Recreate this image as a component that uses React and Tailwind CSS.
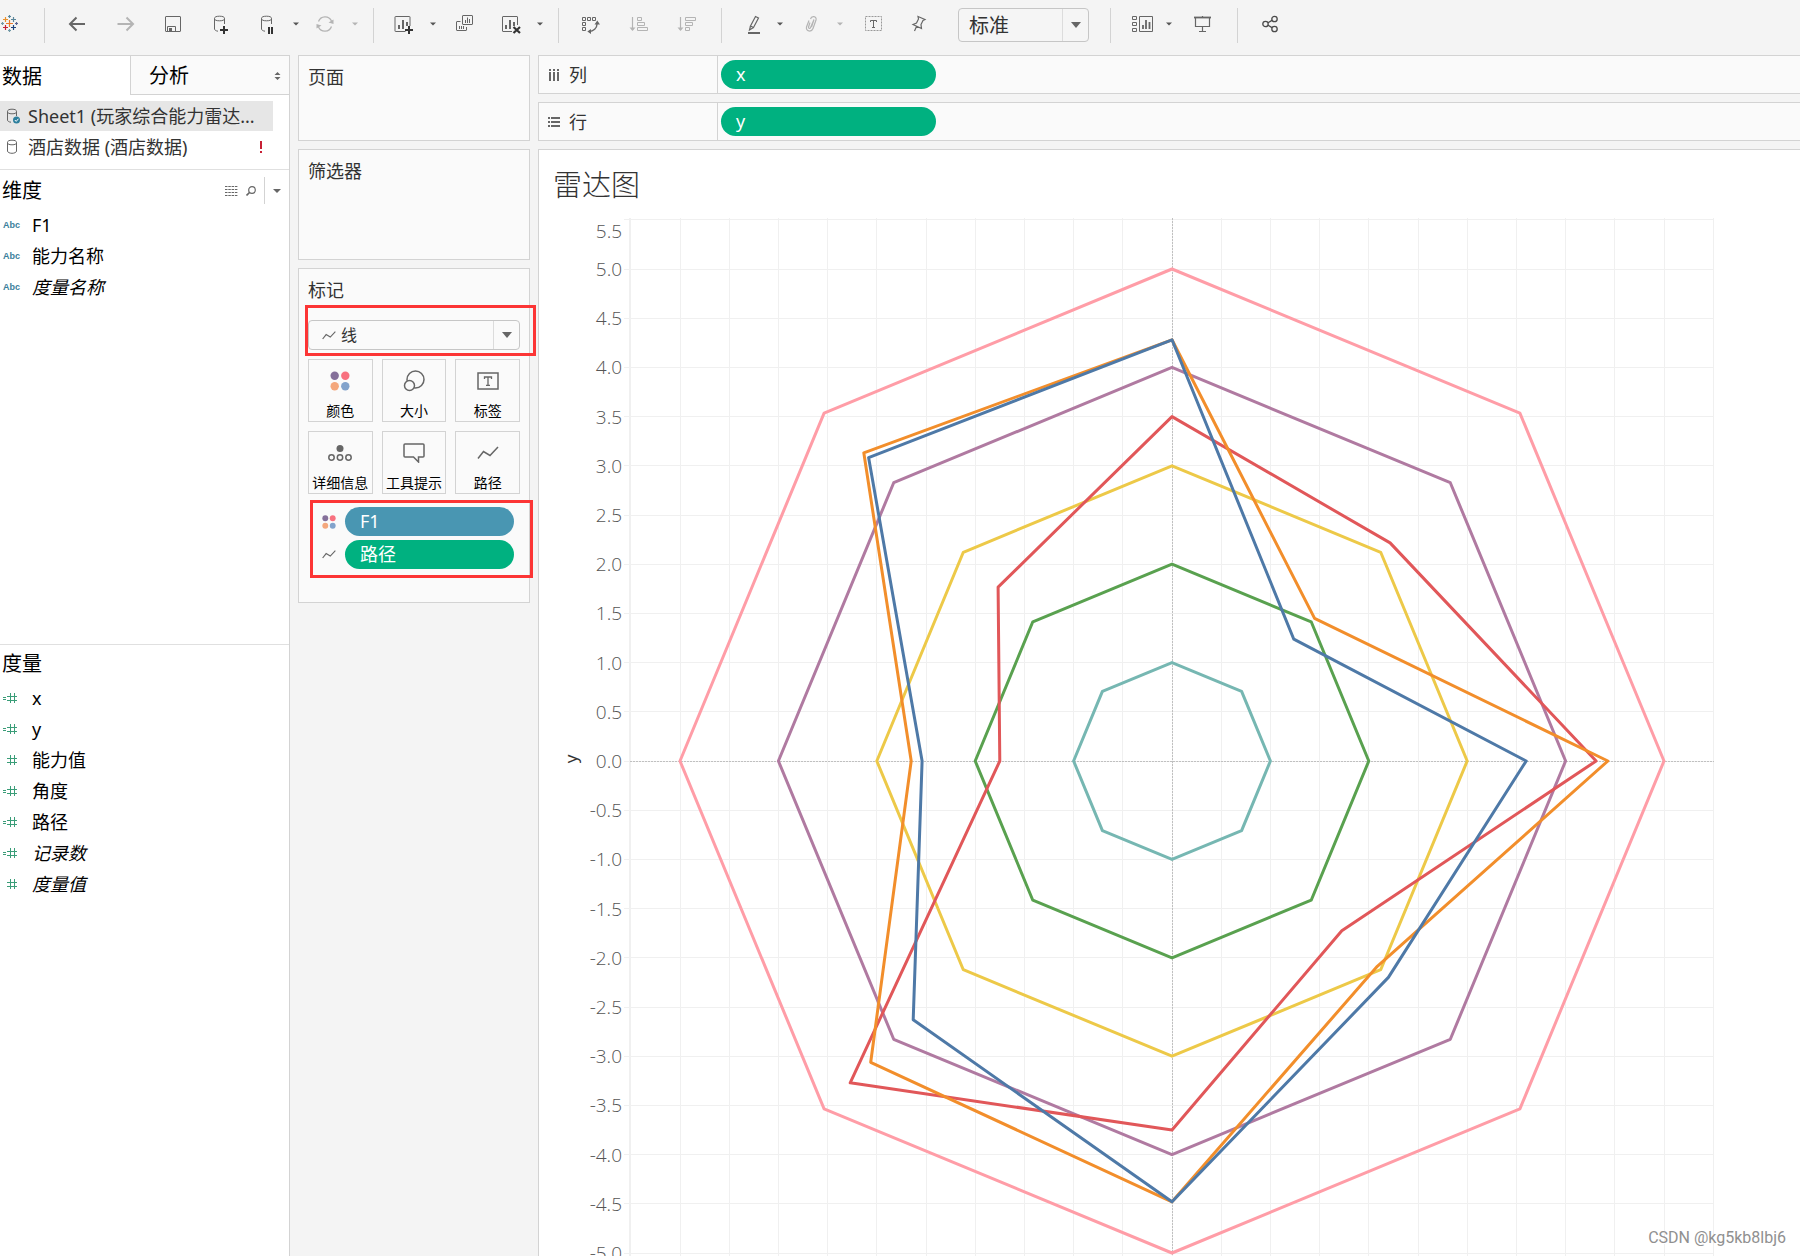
import React from "react";

const SANS = "font-['Noto_Sans','Noto_Sans_CJK_SC',sans-serif]";

/* ---------- icons ---------- */

function Svg({ w = 24, h = 24, children, className = "", stroke = "#666666", sw = 1 }) {
  return (
    <svg
      width={w}
      height={h}
      viewBox={`0 0 ${w} ${h}`}
      fill="none"
      stroke={stroke}
      strokeWidth={sw}
      className={`block shrink-0 ${className}`}
      aria-hidden="true"
    >
      {children}
    </svg>
  );
}

const plus = (x, y, r) => `M${x - r} ${y}H${x + r}M${x} ${y - r}V${y + r}`;

function LogoIcon() {
  return (
    <Svg w={20} sw={1.2}>
      <path d={plus(9.5, 11.5, 3.5)} stroke="#eb7a2c" />
      <path d={plus(5.5, 7.5, 2.5)} stroke="#eb912c" />
      <path d={plus(13.5, 7.5, 2.5)} stroke="#5b879b" />
      <path d={plus(5.5, 15.5, 2.5)} stroke="#c72035" />
      <path d={plus(13.5, 15.5, 2.5)} stroke="#1f457e" />
      <path d={plus(9.5, 4.5, 1.5)} stroke="#59879b" />
      <path d={plus(9.5, 18.5, 1.5)} stroke="#7199a6" />
      <path d={plus(2.5, 11.5, 1.5)} stroke="#7199a6" />
      <path d={plus(16.5, 11.5, 1.5)} stroke="#5c6692" />
    </Svg>
  );
}

const BackIcon = () => (
  <Svg sw={2}>
    <path d="M11.5 5.5L5 12l6.5 6.5M5 12H20" />
  </Svg>
);
const ForwardIcon = () => (
  <Svg sw={2} stroke="#b4b4b4">
    <path d="M13.5 5.5L20 12l-6.500 6.500M20 12H4.500" />
  </Svg>
);
const SaveIcon = () => (
  <Svg>
    <rect x="4.500" y="4.500" width="15" height="15" rx="0.500" />
    <path d="M6.500 19.500V14.500H14.500V19.500" />
    <rect x="8.500" y="16.500" width="2" height="3" fill="#666666" />
  </Svg>
);
const Cylinder = () => (
  <>
    <ellipse cx="10.500" cy="6.500" rx="5" ry="2.300" />
    <path d="M5.500 6.500V17c0 1 1.500 2 3.500 2.200M15.500 6.500V12" />
  </>
);
const DbPlusIcon = () => (
  <Svg>
    <Cylinder />
    <path d="M11 18H19M15 14V22" stroke="#333333" strokeWidth="2" />
  </Svg>
);
const DbPauseIcon = () => (
  <Svg>
    <g transform="translate(-1 0)">
      <Cylinder />
    </g>
    <path d="M12 15V22M15 15V22" stroke="#333333" strokeWidth="2" />
  </Svg>
);
const RefreshIcon = () => (
  <Svg stroke="#b4b4b4" sw={1.3}>
    <path d="M5.500 9.500A7 7 0 0 1 18.500 9M18.500 14.500A7 7 0 0 1 5.500 15" />
    <path d="M20.500 7.500V12L15.500 10.500zM3.500 16.500V12L8.500 13.500z" fill="#b4b4b4" stroke="none" />
  </Svg>
);
const NewSheetIcon = () => (
  <Svg>
    <path d="M14.500 19.500H4.500a.5.5 0 0 1-.5-.5V5a.5.5 0 0 1 .5-.5H18.500a.5.5 0 0 1 .5.5V14" />
    <path d="M8 13V17M12 8V17M16 10V14" strokeWidth="2" />
    <path d="M14 18H22M18 14V22" stroke="#333333" strokeWidth="2" />
  </Svg>
);
const DuplicateIcon = () => (
  <Svg>
    <rect x="9.500" y="3.500" width="10" height="9" rx="0.500" />
    <path d="M12.500 8V11M14.500 5.500V11M16.500 7V11" />
    <path d="M7.500 9.500H4a.5.5 0 0 0-.5.5V18a.5.5 0 0 0 .5.5H13a.5.5 0 0 0 .5-.5V15" />
    <path d="M6.500 14V17M8.500 14V17M10.500 14V17" />
  </Svg>
);
const ClearSheetIcon = () => (
  <Svg>
    <path d="M11 19.500H2a.5.5 0 0 1-.5-.5V5a.5.5 0 0 1 .5-.5H16a.5.5 0 0 1 .5.5V13" />
    <path d="M5 13V17M9 8V17M13 10V14" strokeWidth="2" />
    <path d="M12.500 15L19 21M19 15L12.500 21" stroke="#333333" strokeWidth="2.200" />
  </Svg>
);
const SwapIcon = () => (
  <Svg>
    <path d="M3.500 5.500h3v3h-3zM8.500 5.500h3v3h-3zM13.500 5.500h3v3h-3zM3.500 10.500h3v3h-3zM3.500 15.500h3v3h-3z" />
    <path d="M18 12c0 4-3.500 7.500-8 7.500" strokeWidth="1.400" />
    <path d="M18.300 8.500L21 12.500H15.500zM8.300 19.500L12 17V22z" fill="#666666" stroke="none" />
  </Svg>
);
const SortAscIcon = () => (
  <Svg stroke="#b4b4b4">
    <path d="M5.500 5V18" strokeWidth="1.200" />
    <path d="M2.500 15.500h6L5.500 19z" fill="#b4b4b4" stroke="none" />
    <path d="M10.500 5.500h4v3h-4zM10.500 10.500h7v3h-7zM10.500 15.500h10v3h-10z" />
  </Svg>
);
const SortDescIcon = () => (
  <Svg stroke="#b4b4b4">
    <path d="M5.500 5V18" strokeWidth="1.200" />
    <path d="M2.500 15.500h6L5.500 19z" fill="#b4b4b4" stroke="none" />
    <path d="M10.500 5.500h10v3h-10zM10.500 10.500h7v3h-7zM10.500 15.500h4v3h-4z" />
  </Svg>
);
const PenIcon = () => (
  <Svg>
    <path d="M13.500 4.500L16.500 6L11.500 15.500L8.500 14z" strokeWidth="1.200" />
    <path d="M8.500 14L7.500 18L11.500 15.500" strokeWidth="1.200" />
    <path d="M6 21H18" strokeWidth="2" />
  </Svg>
);
const ClipIcon = () => (
  <Svg stroke="#b4b4b4" sw={1.2}>
    <path d="M10 10.500L8.500 15c-.4 1.500 1.500 2 2 .7L14 7.500M14 7.500L11.500 15M10.500 7c1-3.500 6.500-3 5.500 1L13 16.500c-1.500 4-7.500 3-6.500-1.500L9 8.500" />
  </Svg>
);
const TextBoxIcon = () => (
  <Svg stroke="#999999">
    <rect x="3.500" y="4.500" width="16" height="14" strokeDasharray="2 1" />
    <path d="M8.500 10V8.500H14.500V10M11.500 8.500V15.500M10 15.500H13" stroke="#666666" />
  </Svg>
);
const PinIcon = () => (
  <Svg sw={1.2}>
    <path d="M12 4.500L19 7.500L17 8.500L15 12.500L15.500 16.500L7 12.500L10.500 11L12.500 7zM10.500 14.500L8.500 19" />
  </Svg>
);
const ShowMeIcon = () => (
  <Svg>
    <path d="M1.500 4.500h4v3h-4zM1.500 10.500h4v3h-4zM1.500 16.500h4v3h-4zM8.500 4.500h13v15h-13z" />
    <path d="M12 13V17M15 8V17M18.500 10V17" strokeWidth="1.800" />
  </Svg>
);
const PresentIcon = () => (
  <Svg>
    <path d="M3 5.500H20" strokeWidth="1.800" />
    <path d="M4.500 6V14.500H18.500V6M11.500 14.500V19.500M8 19.500H15M11.500 4V6" strokeWidth="1.200" />
  </Svg>
);
const ShareIcon = () => (
  <Svg stroke="#4a4a4a" sw={1.3}>
    <circle cx="7.500" cy="12" r="2.700" />
    <circle cx="16.500" cy="7" r="2.700" />
    <circle cx="16.500" cy="17" r="2.700" />
    <path d="M10 10.700L14 8.400M10 13.300L14 15.600" />
  </Svg>
);
const Caret = ({ color = "#666666", w = 12, half = 3, drop = 3 }) => (
  <svg width={w} height={8} viewBox={`0 0 ${w} 8`} className="block shrink-0" aria-hidden="true">
    <path d={`M${w / 2 - half} ${(8 - drop) / 2}h${half * 2}l${-half} ${drop}z`} fill={color} />
  </svg>
);
const DbIcon = ({ checked }) => (
  <Svg w={16} h={18}>
    {checked ? (
      <>
        <ellipse cx="7" cy="4.500" rx="4.500" ry="2.300" />
        <path d="M2.500 4.500V13c0 1.300 1.500 2 3.500 2.200M11.500 4.500V9" />
        <circle cx="11.500" cy="13" r="3.500" fill="#2d7f9d" stroke="none" />
        <path d="M9.800 13L11.200 14.400L13.400 11.800" stroke="#ffffff" />
      </>
    ) : (
      <>
        <ellipse cx="7" cy="4.500" rx="4.500" ry="2.300" />
        <path d="M2.500 4.500V13c0 1.300 2 2.300 4.500 2.300s4.500-1 4.500-2.300V4.500" />
      </>
    )}
  </Svg>
);
const HashIcon = ({ calc }) => (
  <Svg w={16} h={12} stroke="#3a9d78">
    <path d="M4 4.500H14M4 8.500H14M7.500 1V11M11.500 1V11" />
    {calc && <path d="M0 5.500H3M0 7.500H3" />}
  </Svg>
);
const DotsIcon = ({ size }) => (
  <svg width={size} height={size} viewBox="0 0 20 20" className="block shrink-0" aria-hidden="true">
    <circle cx="4.700" cy="4.700" r="4.200" fill="#85709a" />
    <circle cx="15.300" cy="4.700" r="4.200" fill="#f8717f" />
    <circle cx="4.700" cy="15.300" r="4.200" fill="#f4a77c" />
    <circle cx="15.300" cy="15.300" r="4.200" fill="#82a3cc" />
  </svg>
);
const LineIcon = ({ w = 22, h = 14, sw = 1.5 }) => (
  <svg width={w} height={h} viewBox="0 0 22 14" fill="none" stroke="#666666" strokeWidth={sw} className="block shrink-0" aria-hidden="true">
    <path d="M1 12.500L6.500 5.500L13 9.500L21 1" />
  </svg>
);

/* ---------- toolbar ---------- */

function Tool({ label, ml, children, disabled }) {
  return (
    <button type="button" aria-label={label} disabled={disabled} className={`mt-1 shrink-0 ${ml}`}>
      {children}
    </button>
  );
}
function ToolCaret({ label, ml, disabled }) {
  return (
    <button type="button" aria-label={label} disabled={disabled} className={`mt-3 shrink-0 ${ml}`}>
      <Caret color={disabled ? "#b4b4b4" : "#555555"} />
    </button>
  );
}
const Sep = ({ ml }) => <div className={`h-[35px] w-px shrink-0 bg-[#d3d3d3] ${ml}`} />;

function Toolbar() {
  return (
    <header className="flex h-[55px] shrink-0 items-start overflow-hidden bg-[#f4f4f4] pt-2">
      <Tool label="起始页" ml="ml-0"><LogoIcon /></Tool>
      <Sep ml="ml-6" />
      <Tool label="撤消" ml="ml-5"><BackIcon /></Tool>
      <Tool label="重做" ml="ml-6" disabled><ForwardIcon /></Tool>
      <Tool label="保存" ml="ml-6"><SaveIcon /></Tool>
      <Tool label="新建数据源" ml="ml-6"><DbPlusIcon /></Tool>
      <Tool label="暂停自动更新" ml="ml-6"><DbPauseIcon /></Tool>
      <ToolCaret label="更新选项" ml="ml-[9px]" />
      <Tool label="运行更新" ml="ml-[11px]" disabled><RefreshIcon /></Tool>
      <ToolCaret label="运行选项" ml="ml-3" disabled />
      <Sep ml="ml-3" />
      <Tool label="新建工作表" ml="ml-[17px]"><NewSheetIcon /></Tool>
      <ToolCaret label="新建选项" ml="ml-3" />
      <Tool label="复制" ml="ml-[14px]"><DuplicateIcon /></Tool>
      <Tool label="清除工作表" ml="ml-6"><ClearSheetIcon /></Tool>
      <ToolCaret label="清除选项" ml="ml-[9px]" />
      <Sep ml="ml-3" />
      <Tool label="交换行和列" ml="ml-5"><SwapIcon /></Tool>
      <Tool label="升序排序" ml="ml-6" disabled><SortAscIcon /></Tool>
      <Tool label="降序排序" ml="ml-6" disabled><SortDescIcon /></Tool>
      <Sep ml="ml-[22px]" />
      <Tool label="突出显示" ml="ml-5"><PenIcon /></Tool>
      <ToolCaret label="突出显示选项" ml="ml-2" />
      <Tool label="组成员" ml="ml-[14px]" disabled><ClipIcon /></Tool>
      <ToolCaret label="组选项" ml="ml-2.5" disabled />
      <Tool label="显示标记标签" ml="ml-4"><TextBoxIcon /></Tool>
      <Tool label="固定轴" ml="ml-5"><PinIcon /></Tool>
      <div className="relative ml-7 h-[34px] w-[131px] shrink-0">
        <select
          aria-label="适合"
          className="h-full w-full appearance-none rounded-sm border border-[#c6c6c6] bg-[#f5f5f5] pt-0.5 pl-2.5 text-xl leading-6 text-[#333333]"
        >
          <option>标准</option>
        </select>
        <span className="pointer-events-none absolute inset-y-px right-px flex w-[26px] items-center justify-center border-l border-[#dcdcdc]">
          <Caret w={16} half={5} drop={6} />
        </span>
      </div>
      <Sep ml="ml-[21px]" />
      <Tool label="智能推荐" ml="ml-5"><ShowMeIcon /></Tool>
      <ToolCaret label="显示卡选项" ml="ml-2" />
      <Tool label="演示模式" ml="ml-4"><PresentIcon /></Tool>
      <Sep ml="ml-[22px]" />
      <Tool label="共享" ml="ml-5"><ShareIcon /></Tool>
    </header>
  );
}

/* ---------- data pane ---------- */

const DIMENSIONS = [
  { name: "F1" },
  { name: "能力名称" },
  { name: "度量名称", italic: true },
];
const MEASURES = [
  { name: "x", calc: true },
  { name: "y", calc: true },
  { name: "能力值" },
  { name: "角度", calc: true },
  { name: "路径", calc: true },
  { name: "记录数", calc: true, italic: true },
  { name: "度量值", italic: true },
];

function Field({ icon, name, italic }) {
  return (
    <li className="flex h-[31px] items-center text-lg leading-6 text-black">
      <span className="flex w-8 shrink-0 items-center pl-[3px]">{icon}</span>
      <span className={italic ? "italic" : ""}>{name}</span>
    </li>
  );
}

function DataPane() {
  return (
    <aside className="flex w-[290px] shrink-0 flex-col border-t border-r border-[#d3d3d3] bg-white">
      <div className="flex h-[39px] shrink-0 text-xl leading-6">
        <button type="button" className="w-[130px] pt-0.5 pl-0.5 text-left text-black">数据</button>
        <button
          type="button"
          className="flex flex-1 items-center justify-between border-b border-l border-[#d3d3d3] bg-[#fafafa] pt-0.5 pr-2 pl-[18px] text-black"
        >
          分析
          <Svg w={7} h={8} stroke="none">
            <path d="M3.500 0L6.500 3H.5zM3.500 8L6.500 5H.5z" fill="#666666" />
          </Svg>
        </button>
      </div>
      <ul className="mt-1.5 h-[68px] shrink-0 text-lg leading-6 text-[#333333]">
        <li className="mr-4 flex h-[30px] items-center bg-[#e6e6e6] pl-[5px]">
          <DbIcon checked />
          <span className="ml-[7px] whitespace-nowrap">Sheet1 (玩家综合能力雷达...</span>
        </li>
        <li className="mr-4 flex h-[31px] items-center pl-[5px]">
          <DbIcon />
          <span className="ml-[7px] flex-1 whitespace-nowrap">酒店数据 (酒店数据)</span>
          <Svg w={4} h={12} stroke="#c72035" sw={2} className="mr-2.5">
            <path d="M2 0V8M2 10V12" />
          </Svg>
        </li>
      </ul>
      <section className="h-[475px] shrink-0 border-t border-[#e0e0e0]">
        <div className="flex h-[39px] items-center pt-0.5 pl-0.5">
          <h2 className="flex-1 text-xl leading-6 text-black">维度</h2>
          <button type="button" aria-label="查看数据">
            <Svg w={13} h={10}>
              <path d="M0 .5H13M0 3.500H13M0 6.500H13M0 9.500H13" strokeDasharray="2.500 .8" />
            </Svg>
          </button>
          <button type="button" aria-label="查找字段" className="ml-2">
            <Svg w={10} h={10} sw={1.2}>
              <circle cx="6" cy="4" r="3.300" />
              <path d="M3.500 6.500L.5 9.500" strokeWidth="1.600" />
            </Svg>
          </button>
          <span className="ml-2 h-[27px] w-px bg-[#d3d3d3]" />
          <button type="button" aria-label="维度菜单" className="mr-1.5 ml-1.5">
            <Caret half={4} drop={4} />
          </button>
        </div>
        <ul>
          {DIMENSIONS.map((f) => (
            <Field
              key={f.name}
              {...f}
              icon={<span className="font-['Liberation_Sans',sans-serif] text-[9px] font-bold text-[#3b7f9c]">Abc</span>}
            />
          ))}
        </ul>
      </section>
      <section className="flex-1 border-t border-[#e0e0e0]">
        <h2 className="h-[37px] pt-[7px] pl-0.5 text-xl leading-6 text-black">度量</h2>
        <ul>
          {MEASURES.map((f) => (
            <Field key={f.name} {...f} icon={<HashIcon calc={f.calc} />} />
          ))}
        </ul>
      </section>
    </aside>
  );
}

/* ---------- cards ---------- */

function Card({ title, height, children }) {
  return (
    <section className={`border border-[#d3d3d3] bg-[#fafafa] px-[9px] ${height}`}>
      <h2 className="pt-[9px] text-lg leading-6 text-[#333333]">{title}</h2>
      {children}
    </section>
  );
}

function MarkButton({ label, children }) {
  return (
    <button type="button" className="flex h-[63px] flex-col items-center border border-[#d3d3d3] bg-[#fafafa] text-sm leading-5 text-black">
      <span className="flex h-[41px] items-center">{children}</span>
      <span className="whitespace-nowrap">{label}</span>
    </button>
  );
}

function Pill({ color, className = "", children }) {
  return (
    <button type="button" className={`h-[29px] rounded-full pb-0.5 pl-[15px] text-left text-lg leading-6 text-white ${color} ${className}`}>
      {children}
    </button>
  );
}

function Cards() {
  return (
    <div className="relative flex w-[232px] shrink-0 flex-col gap-2">
      <Card title="页面" height="h-[86px]" />
      <Card title="筛选器" height="h-[111px]" />
      <Card title="标记" height="relative h-[335px]">
        <div className="relative mt-[18px] h-[30px]">
          <select
            aria-label="标记类型"
            className="h-full w-full appearance-none rounded-sm border border-[#c6c6c6] bg-[#fafafa] pl-8 text-base leading-5 text-[#333333]"
          >
            <option>线</option>
          </select>
          <span className="pointer-events-none absolute inset-y-0 left-3.5 flex items-center">
            <LineIcon w={14} h={9} sw={1.8} />
          </span>
          <span className="pointer-events-none absolute inset-y-px right-px flex w-[26px] items-center justify-center border-l border-[#dcdcdc]">
            <Caret w={16} half={5} drop={6} />
          </span>
        </div>
        <div className="mt-[9px] grid grid-cols-3 gap-[9px]">
          <MarkButton label="颜色"><DotsIcon size={20} /></MarkButton>
          <MarkButton label="大小">
            <Svg w={22} h={22} sw={1.5}>
              <circle cx="12.500" cy="9.500" r="8.500" />
              <circle cx="6.500" cy="15.500" r="5" fill="#fafafa" />
            </Svg>
          </MarkButton>
          <MarkButton label="标签">
            <Svg w={22} h={18} sw={1.5}>
              <rect x="1" y="1" width="20" height="16" />
              <path d="M7.500 7V5H14.500V7M11 5V13M9 13.300H13" strokeWidth="1.300" />
            </Svg>
          </MarkButton>
          <MarkButton label="详细信息">
            <Svg w={24} h={18} sw={1.5}>
              <circle cx="12" cy="4.500" r="3.500" fill="#666666" stroke="none" />
              <circle cx="3.500" cy="13.500" r="2.700" />
              <circle cx="12" cy="13.500" r="2.700" />
              <circle cx="20.500" cy="13.500" r="2.700" />
            </Svg>
          </MarkButton>
          <MarkButton label="工具提示">
            <Svg w={22} h={20} sw={1.5}>
              <path d="M2 1H20a1 1 0 0 1 1 1V13a1 1 0 0 1-1 1H15.500V19L10.500 14H2a1 1 0 0 1-1-1V2a1 1 0 0 1 1-1z" />
            </Svg>
          </MarkButton>
          <MarkButton label="路径"><LineIcon /></MarkButton>
        </div>
        <div className="mt-[13px] flex flex-col gap-1 pr-1.5 pl-3.5">
          <div className="flex items-center gap-[9px]">
            <DotsIcon size={14} />
            <Pill color="bg-[#4996b2]" className="flex-1">F1</Pill>
          </div>
          <div className="flex items-center gap-[9px]">
            <LineIcon w={14} h={9} sw={1.8} />
            <Pill color="bg-[#00b180]" className="flex-1">路径</Pill>
          </div>
        </div>
        <div className="pointer-events-none absolute top-9 left-1.5 h-[51px] w-[231px] border-[3px] border-[#fc3535]" />
        <div className="pointer-events-none absolute top-[231px] left-[11px] h-[78px] w-[223px] border-[3px] border-[#fc3535]" />
      </Card>
    </div>
  );
}

/* ---------- shelves ---------- */

function Shelf({ icon, label, pill }) {
  return (
    <div className="flex h-[39px] shrink-0 items-stretch border-y border-l border-[#d3d3d3] bg-[#fafafa]">
      <div className="flex w-[179px] items-center gap-[9px] border-r border-[#d3d3d3] pl-[9px] text-lg leading-6 text-[#333333]">
        {icon}
        {label}
      </div>
      <Pill color="bg-[#00b180]" className="mt-1 ml-[3px] w-[215px]">{pill}</Pill>
    </div>
  );
}

/* ---------- chart ---------- */

const CX = 633;
const CY = 545;
const UNIT = 98.4;
const RIGHT = 1175;

// Radii run counter-clockwise in 45° steps, starting at 0°.
const ring = (r) => Array(8).fill(r);
const SERIES = [
  { color: "#ff9da7", r: ring(5) },
  { color: "#b07aa1", r: ring(4) },
  { color: "#edc948", r: ring(3) },
  { color: "#59a14f", r: ring(2) },
  { color: "#76b7b2", r: ring(1) },
  { color: "#e15759", r: [4.31, 3.135, 3.5, 2.5, 1.75, 4.625, 3.75, 2.44] },
  { color: "#f28e2b", r: [4.43, 2.05, 4.28, 4.43, 2.65, 4.33, 4.48, 2.95] },
  { color: "#4e79a7", r: [3.6, 1.75, 4.28, 4.36, 2.54, 3.72, 4.48, 3.11] },
];
const toPoints = (radii) =>
  radii
    .map((r, i) => {
      const a = (i * Math.PI) / 4;
      return `${(CX + r * UNIT * Math.cos(a)).toFixed(1)},${(CY - r * UNIT * Math.sin(a)).toFixed(1)}`;
    })
    .join(" ");

const TICKS = Array.from({ length: 23 }, (_, i) => 5.5 - i / 2);
const LABELS = TICKS.slice(0, 22);
const crisp = (v) => Math.floor(v) + 0.5;

function RadarChart() {
  return (
    <svg viewBox="0 0 1261 1100" className="block h-auto w-full" role="img" aria-label="雷达图">
      <g stroke="#f0f0f0" strokeWidth="1">
        {TICKS.map((t) => (
          <line key={`h${t}`} x1="85" x2={RIGHT} y1={crisp(CY - t * UNIT)} y2={crisp(CY - t * UNIT)} />
        ))}
        {TICKS.map((t) => (
          <line key={`v${t}`} y1="2" y2="1100" x1={crisp(CX + t * UNIT)} x2={crisp(CX + t * UNIT)} />
        ))}
        <line x1="90.500" x2="90.500" y1="2" y2="1100" />
      </g>
      <g stroke="#c0c0c0" strokeDasharray="2 1">
        <line x1="91" x2={RIGHT} y1={crisp(CY)} y2={crisp(CY)} />
        <line x1={crisp(CX)} x2={crisp(CX)} y1="2" y2="1100" />
      </g>
      <g className="font-['Open_Sans',sans-serif] text-[19px] font-light" fill="#555555" textAnchor="end">
        {LABELS.map((t) => (
          <text key={t} x="83" y={Math.round(CY - t * UNIT) + (t === 5.5 ? 18 : 7)}>
            {t.toFixed(1)}
          </text>
        ))}
      </g>
      <text
        className="font-['Noto_Sans',sans-serif] text-[17px]"
        fill="#333333"
        textAnchor="middle"
        transform="translate(38 543) rotate(-90)"
      >
        y
      </text>
      <g fill="none" strokeWidth="3" strokeLinejoin="round">
        {SERIES.map((s) => (
          <polygon key={s.color} points={toPoints(s.r)} stroke={s.color} />
        ))}
      </g>
    </svg>
  );
}

/* ---------- page ---------- */

export default function App() {
  return (
    <div className={`relative flex h-screen flex-col overflow-hidden bg-[#f4f4f4] ${SANS}`}>
      <Toolbar />
      <div className="flex min-h-0 flex-1 gap-2">
        <DataPane />
        <Cards />
        <main className="flex min-w-0 flex-1 flex-col gap-2">
          <Shelf
            label="列"
            pill="x"
            icon={
              <Svg w={12} h={12} sw={2}>
                <path d="M2 0V2M6 0V2M10 0V2M2 3V12M6 3V12M10 3V12" />
              </Svg>
            }
          />
          <Shelf
            label="行"
            pill="y"
            icon={
              <Svg w={12} h={12} sw={2}>
                <path d="M0 2H2M0 6H2M0 10H2M3 2H12M3 6H12M3 10H12" />
              </Svg>
            }
          />
          <section className="min-h-0 flex-1 overflow-hidden border-t border-l border-[#d3d3d3] bg-white">
            <h1 className="h-[66px] pt-[15px] pl-3.5 font-['Noto_Sans_CJK_SC',sans-serif] text-[29px] leading-9 font-light text-[#333333]">
              雷达图
            </h1>
            <RadarChart />
          </section>
        </main>
      </div>
      <p className="absolute right-3.5 bottom-2 font-[Roboto,sans-serif] text-base leading-5 text-[#909090] [text-shadow:1px_1px_0_#ffffff]">
        CSDN @kg5kb8lbj6
      </p>
    </div>
  );
}
